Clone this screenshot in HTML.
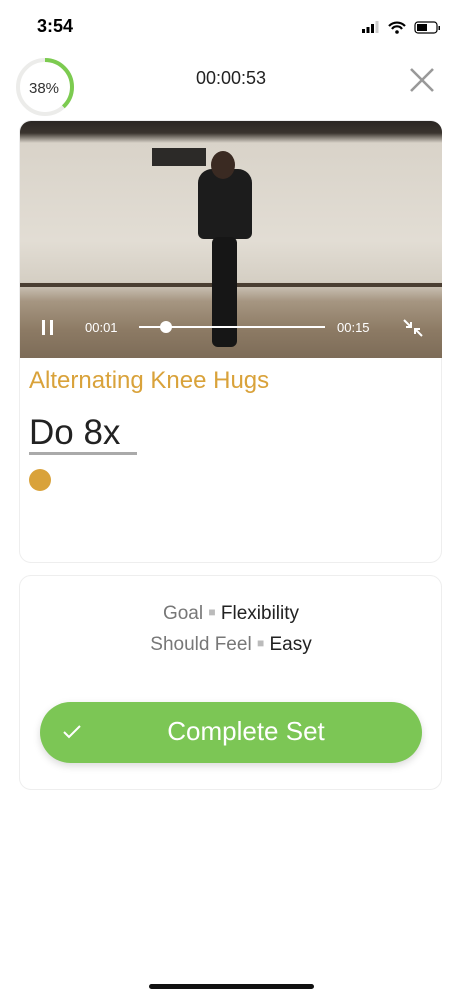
<!DOCTYPE html>
<html><head><style>
body{margin:0;width:462px;height:1000px;background:#fff;font-family:"Liberation Sans",sans-serif;position:relative;overflow:hidden}
.a{position:absolute}
</style></head><body>
<div class="a" style="left:37px;top:16px;font-size:18px;font-weight:bold;color:#000">3:54</div>
<svg class="a" style="left:360px;top:20px" width="85" height="16">
<rect x="2" y="9" width="3" height="4" fill="#000"/><rect x="6.5" y="7" width="3" height="6" fill="#000"/><rect x="11" y="4" width="3" height="9" fill="#000"/><rect x="15.5" y="1" width="3" height="12" fill="#ccc"/>
<path d="M29 6 a11 11 0 0 1 16 0 M32 9 a6 6 0 0 1 10 0" stroke="#000" stroke-width="2.2" fill="none"/><circle cx="37" cy="12" r="1.8" fill="#000"/>
<rect x="55" y="2" width="22" height="11" rx="3" fill="none" stroke="#000" stroke-width="1.2"/><rect x="57" y="4" width="10" height="7" fill="#000"/><rect x="78.5" y="6" width="1.5" height="4" fill="#000"/>
</svg>
<svg class="a" style="left:14px;top:56px" width="62" height="62">
<circle cx="31" cy="31" r="27" fill="none" stroke="#ececea" stroke-width="4"/>
<circle cx="31" cy="31" r="27" fill="none" stroke="#7ccb50" stroke-width="4" stroke-dasharray="64.5 200" transform="rotate(-90 31 31)"/>
<text x="30" y="37" font-size="15" text-anchor="middle" fill="#333" font-family="Liberation Sans">38%</text>
</svg>
<div class="a" style="left:0;width:462px;top:68px;text-align:center;font-size:18px;color:#222">00:00:53</div>
<svg class="a" style="left:408px;top:66px" width="28" height="28"><path d="M3 3L25 25M25 3L3 25" stroke="#999" stroke-width="2.6"/></svg>

<div class="a" style="left:19px;top:120px;width:423px;height:443px;border:1px solid #eee;border-radius:12px;box-sizing:border-box"></div>
<div class="a" style="left:20px;top:121px;width:422px;height:237px;border-radius:11px 11px 0 0;overflow:hidden;background:linear-gradient(#2a2623 0,#3a342e 12px,#d9d3c9 22px,#e2ddd4 120px,#d5cfc4 160px,#a69682 180px,#8c7a64 210px,#7d6c58 237px)">
<div class="a" style="left:132px;top:27px;width:54px;height:18px;background:#2c2a28"></div>
<div class="a" style="left:0;top:162px;width:422px;height:4px;background:#4a3e32"></div>
<div class="a" style="left:178px;top:48px;width:54px;height:70px;background:#1c1c1c;border-radius:14px 14px 6px 6px"></div>
<div class="a" style="left:191px;top:30px;width:24px;height:28px;background:#3a2a22;border-radius:50%"></div>
<div class="a" style="left:192px;top:116px;width:25px;height:110px;background:#161616;border-radius:6px"></div>
</div>
<svg class="a" style="left:40px;top:318px" width="385" height="20">
<rect x="2" y="2" width="3" height="15" fill="#fff"/><rect x="10" y="2" width="3" height="15" fill="#fff"/>
<text x="45" y="14" font-size="13" fill="#fff" font-family="Liberation Sans">00:01</text>
<rect x="99" y="8" width="186" height="2" fill="#fff"/><circle cx="126" cy="9" r="6" fill="#fff"/>
<text x="297" y="14" font-size="13" fill="#fff" font-family="Liberation Sans">00:15</text>
<path d="M364 2l7 7M366 9h5v-5M382 18l-7-7M380 11h-5v5" stroke="#fff" stroke-width="2" fill="none"/>
</svg>
<div class="a" style="left:29px;top:367px;font-size:24px;color:#d9a23a">Alternating Knee Hugs</div>
<div class="a" style="left:29px;top:413px;font-size:35px;color:#222;line-height:40px">Do 8x</div>
<div class="a" style="left:29px;top:452px;width:108px;height:3px;background:#aaa"></div>
<div class="a" style="left:29px;top:469px;width:22px;height:22px;border-radius:50%;background:#d9a23a"></div>

<div class="a" style="left:19px;top:575px;width:423px;height:215px;border:1px solid #eee;border-radius:12px;box-sizing:border-box"></div>
<div class="a" style="left:0;width:462px;top:603px;text-align:center;font-size:19px;color:#777">Goal <span style="color:#bbb;font-size:12px;vertical-align:3px">■</span> <span style="color:#222">Flexibility</span></div>
<div class="a" style="left:0;width:462px;top:634px;text-align:center;font-size:19px;color:#777">Should Feel <span style="color:#bbb;font-size:12px;vertical-align:3px">■</span> <span style="color:#222">Easy</span></div>
<div class="a" style="left:40px;top:702px;width:382px;height:61px;border-radius:31px;background:#7cc655;box-shadow:0 3px 8px rgba(0,0,0,.15)"></div>
<svg class="a" style="left:62px;top:724px" width="20" height="16"><path d="M2 8l5 5L18 2" stroke="#fff" stroke-width="2" fill="none"/></svg>
<div class="a" style="left:40px;width:412px;top:716px;text-align:center;font-size:26px;color:#fff">Complete Set</div>
<div class="a" style="left:149px;top:984px;width:165px;height:5px;border-radius:3px;background:#111"></div>
</body></html>
